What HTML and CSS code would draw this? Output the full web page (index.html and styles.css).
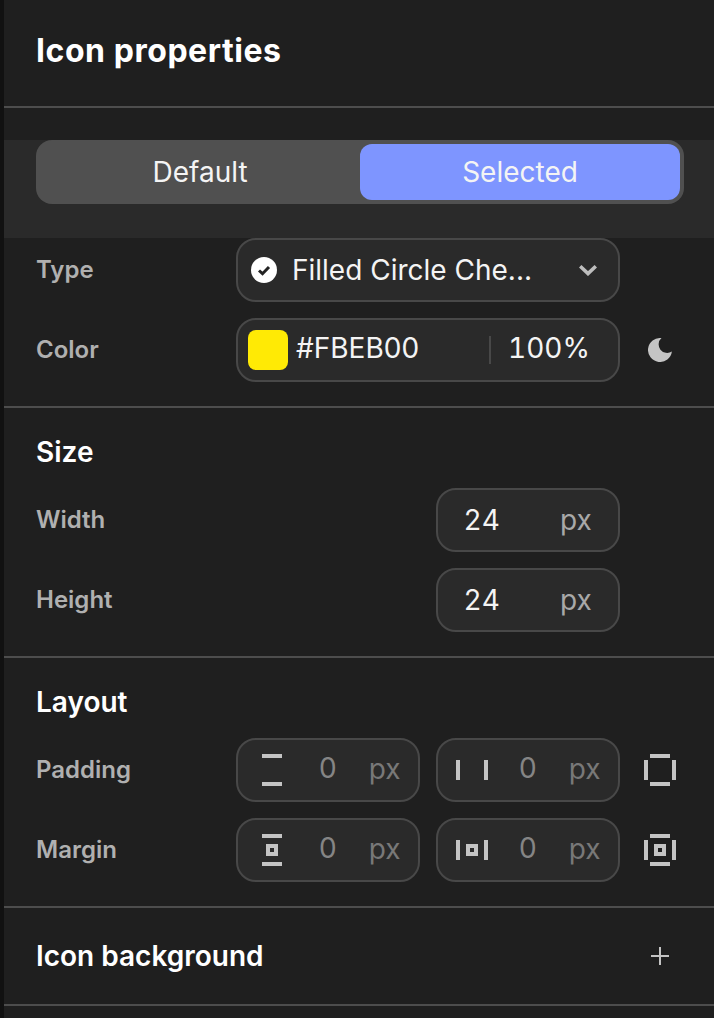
FILE: index.html
```html
<!DOCTYPE html>
<html lang="en">
<head>
    <meta charset="UTF-8">
    <meta name="viewport" content="width=device-width, initial-scale=1.0">
    <title>Icon properties</title>
    <link rel="stylesheet" href="styles.css">
</head>
<body>
    <div class="panel">
        <div class="panel-header">
            <h1>Icon properties</h1>
        </div>

        <div class="state-band">
            <div class="state-switch">
                <div class="state-option">Default</div>
                <div class="state-option selected">Selected</div>
            </div>
        </div>

        <div class="section first">
            <div class="row">
                <div class="row-label">Type</div>
                <div class="field select-field">
                    <svg class="type-icon" width="28" height="28" viewBox="0 0 28 28">
                        <circle cx="14" cy="14" r="13" fill="#fff"/>
                        <path d="M9 14.5l3.5 3.2L19 11" fill="none" stroke="#222" stroke-width="3"/>
                    </svg>
                    <span class="select-text">Filled Circle Che...</span>
                    <svg class="chevron" width="18" height="12" viewBox="0 0 18 12">
                        <path d="M1.2 2.2L9 9.6l7.8-7.4" fill="none" stroke="#bdbdbd" stroke-width="3.6"/>
                    </svg>
                </div>
                <div class="row-spacer"></div>
            </div>
            <div class="row">
                <div class="row-label">Color</div>
                <div class="field color-field">
                    <span class="swatch"></span>
                    <span class="color-hex">#FBEB00</span>
                    <span class="color-opacity">100%</span>
                </div>
                <div class="row-action">
                    <svg width="24" height="24" viewBox="0 0 24 24">
                        <path d="M13.5.1A12 12 0 1 0 23.9 13.5 8.5 8.5 0 0 1 13.5.1z" fill="#c4c4c4"/>
                    </svg>
                </div>
            </div>
        </div>

        <div class="section">
            <h2>Size</h2>
            <div class="row">
                <div class="row-label">Width</div>
                <div class="field unit-field">
                    <span class="unit-value">24</span>
                    <span class="unit">px</span>
                </div>
                <div class="row-spacer"></div>
            </div>
            <div class="row">
                <div class="row-label">Height</div>
                <div class="field unit-field">
                    <span class="unit-value">24</span>
                    <span class="unit">px</span>
                </div>
                <div class="row-spacer"></div>
            </div>
        </div>

        <div class="section">
            <h2>Layout</h2>
            <div class="row">
                <div class="row-label">Padding</div>
                <div class="field spacing-field">
                    <svg class="side-icon" width="32" height="32" viewBox="0 0 32 32">
                        <path d="M6 0h20v4H6zM6 28h20v4H6z" fill="#c4c4c4"/>
                    </svg>
                    <span class="spacing-value">0</span>
                    <span class="spacing-unit">px</span>
                </div>
                <div class="field spacing-field">
                    <svg class="side-icon" width="32" height="32" viewBox="0 0 32 32">
                        <path d="M0 6h4v20H0zM28 6h4v20h-4z" fill="#c4c4c4"/>
                    </svg>
                    <span class="spacing-value">0</span>
                    <span class="spacing-unit">px</span>
                </div>
                <div class="row-action">
                    <svg width="32" height="32" viewBox="0 0 32 32">
                        <path d="M6 0h20v4H6zM6 28h20v4H6zM0 6h4v20H0zM28 6h4v20h-4z" fill="#c4c4c4"/>
                    </svg>
                </div>
            </div>
            <div class="row">
                <div class="row-label">Margin</div>
                <div class="field spacing-field">
                    <svg class="side-icon" width="32" height="32" viewBox="0 0 32 32">
                        <path d="M6 0h20v4H6zM6 28h20v4H6z" fill="#c4c4c4"/>
                        <path d="M10 10h12v12H10zM14 14v4h4v-4z" fill="#c4c4c4" fill-rule="evenodd"/>
                    </svg>
                    <span class="spacing-value">0</span>
                    <span class="spacing-unit">px</span>
                </div>
                <div class="field spacing-field">
                    <svg class="side-icon" width="32" height="32" viewBox="0 0 32 32">
                        <path d="M0 6h4v20H0zM28 6h4v20h-4z" fill="#c4c4c4"/>
                        <path d="M10 10h12v12H10zM14 14v4h4v-4z" fill="#c4c4c4" fill-rule="evenodd"/>
                    </svg>
                    <span class="spacing-value">0</span>
                    <span class="spacing-unit">px</span>
                </div>
                <div class="row-action">
                    <svg width="32" height="32" viewBox="0 0 32 32">
                        <path d="M6 0h20v4H6zM6 28h20v4H6zM0 6h4v20H0zM28 6h4v20h-4z" fill="#c4c4c4"/>
                        <path d="M10 10h12v12H10zM14 14v4h4v-4z" fill="#c4c4c4" fill-rule="evenodd"/>
                    </svg>
                </div>
            </div>
        </div>

        <div class="section collapsed">
            <h2>Icon background</h2>
            <svg width="20" height="20" viewBox="0 0 20 20">
                <path d="M10 1v18M1 10h18" fill="none" stroke="#c4c4c4" stroke-width="2"/>
            </svg>
        </div>
    </div>
</body>
</html>
```

FILE: styles.css
```css
html, body {
    height: 100%;
}

body {
    margin: 0;
    background: #111;
    color: #fff;
    font-family: Inter, "Noto Sans", sans-serif;
    overflow: hidden;
}

.panel {
    margin-left: 4px;
    height: 100%;
    background: #1f1f1f;
}

.panel-header {
    height: 108px;
    padding: 0 32px;
    display: flex;
    align-items: center;
    box-sizing: border-box;
    border-bottom: 2px solid #4d4d4d;
}

h1 {
    margin: 0 0 6px;
    font-size: 32px;
    font-weight: 700;
    letter-spacing: 0.55px;
}

h2 {
    margin: 0;
    font-size: 28px;
    font-weight: 600;
    line-height: 32px;
}

.state-band {
    margin-top: 32px;
    height: 98px;
    padding: 0 30px 0 32px;
    background: #2a2a2a;
}

.state-switch {
    height: 64px;
    box-sizing: border-box;
    padding: 4px;
    display: flex;
    background: #505050;
    border-radius: 16px;
}

.state-option {
    flex: 1;
    display: flex;
    align-items: center;
    justify-content: center;
    font-size: 28px;
    border-radius: 12px;
    color: #f4f4f4;
}

.state-option.selected {
    background: #7e95ff;
}

.section {
    padding: 28px 30px 24px 32px;
    border-bottom: 2px solid #4d4d4d;
}

.section.first {
    padding-top: 0;
}

.row {
    display: flex;
    align-items: center;
    gap: 16px;
    margin-top: 16px;
    height: 64px;
}

.section.first .row:first-child {
    margin-top: 0;
}

.section h2 + .row {
    margin-top: 20px;
}

.row-label {
    width: 184px;
    flex: none;
    padding-bottom: 2px;
    font-size: 24px;
    font-weight: 600;
    color: #b0b0b0;
}

.row-spacer, .row-action {
    width: 48px;
    flex: none;
}

.row-action {
    display: flex;
    justify-content: center;
}

.field {
    height: 64px;
    box-sizing: border-box;
    display: flex;
    align-items: center;
    background: #2a2a2a;
    border: 2px solid #484848;
    border-radius: 20px;
    font-size: 28px;
    color: #f4f4f4;
}

.select-field, .color-field {
    flex: 1;
}

.unit-field {
    width: 184px;
    margin-left: auto;
    flex: none;
}

.spacing-field {
    width: 184px;
    flex: none;
    color: #787878;
}

.select-field {
    padding: 0 21px 0 12px;
}

.type-icon {
    margin-right: 14px;
    flex: none;
}

.select-text {
    flex: 1;
    white-space: nowrap;
}

.color-field {
    padding: 0 10px;
}

.swatch {
    width: 40px;
    height: 40px;
    border-radius: 8px;
    background: #ffea05;
    flex: none;
    margin-right: 8px;
}

.color-hex {
    flex: 1;
    padding-bottom: 4px;
}

.color-opacity {
    border-left: 2px solid #484848;
    padding: 0 0 4px 17px;
    margin-right: 18px;
    line-height: 24px;
    font-variant-numeric: tabular-nums;
}

.unit-value {
    width: 92px;
    padding-left: 26px;
    box-sizing: border-box;
    letter-spacing: 1px;
}

.unit {
    margin-left: 30px;
    color: #a8a8a8;
}

.side-icon {
    margin-left: 18px;
    flex: none;
}

.spacing-value {
    margin-left: 31px;
    padding-bottom: 4px;
    color: #858585;
}

.spacing-unit {
    margin-left: 32px;
    padding-bottom: 2px;
}

.collapsed {
    height: 98px;
    box-sizing: border-box;
    padding: 0 44px 0 32px;
    display: flex;
    align-items: center;
    justify-content: space-between;
}
```
